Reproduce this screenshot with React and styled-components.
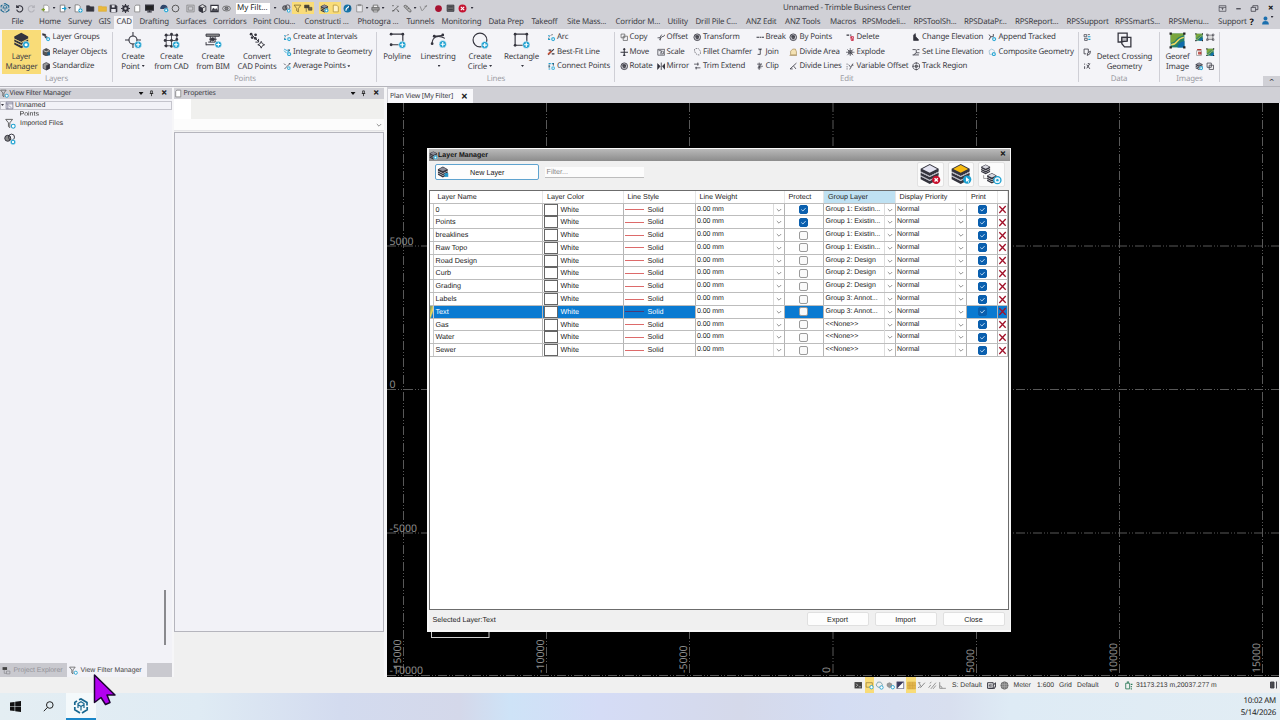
import React from "react";
import styled, { createGlobalStyle, css } from "styled-components";

const colors = {
  chrome: "#d0d0d6",
  ribbon: "#f4f4f8",
  panel: "#f2f2f7",
  face: "#f0f0f0",
  ink: "#3c3c44",
  dark: "#34343e",
  cyan: "#1a9fd0",
  blue: "#0a7ad1",
  highlight: "#f9dc78",
};

const GlobalStyle = createGlobalStyle`
  * { box-sizing: border-box; }
  body {
    margin: 0;
    overflow: hidden;
    font-family: "Noto Sans", "Open Sans", sans-serif;
    text-rendering: geometricPrecision;
  }
  svg { display: block; flex: none; }
`;

/* ---------- icons ---------- */

const Plus = ({ x = 12, y = 12, r = 4, mark = "plus" }) => (
  <g>
    <circle cx={x} cy={y} r={r} fill={colors.cyan} stroke="#fff" strokeWidth="0.5" />
    {mark === "plus" && (
      <path
        d={`M${x - r * 0.6} ${y}h${r * 1.2}M${x} ${y - r * 0.6}v${r * 1.2}`}
        stroke="#fff"
        strokeWidth={r * 0.32}
      />
    )}
    {mark === "dot" && <circle cx={x} cy={y} r={r * 0.45} fill="#fff" stroke="none" />}
  </g>
);

const Stack = ({ top = "#34343e", body = "#34343e" }) => (
  <g stroke="none">
    <path d="M1.200 9.800L7.800 13l6.500-3.200v2L7.800 15.200l-6.600-3.400z" fill={body} />
    <path d="M1.200 7L7.800 10.200 14.300 7v2L7.800 12.300 1.200 9z" fill={body} />
    <path d="M1.200 4.200L7.800 .8l6.500 3.400v2L7.800 9.500 1.200 6.200z" fill={body} />
    <path d="M2.300 4.300l5.500-2.800 5.400 2.800-5.400 2.700z" fill={top} />
  </g>
);

const Node = ({ at }) =>
  at.map(([x, y]) => <circle key={`${x}-${y}`} cx={x} cy={y} r="1.3" fill={colors.dark} stroke="none" />);

const glyphs = {
  logo: (
    <g stroke="#17668f" fill="none" strokeWidth="1.7">
      <path d="M6 1.800L8 .9l6 3.500v3M14.200 9v2.800L9 15M7 15l-5.200-3.200V9M1.800 7V4.400L4 3" />
      <path d="M8 8.500v4M8 8.500L4.800 6.500M8 8.500l3.200-2M5 10V5.500l3-1.700 3 1.700V10" strokeWidth="1.200" />
    </g>
  ),
  undo: <path d="M3 2v4h4M3.500 6a5.500 5.500 0 1 1-.5 4" />,
  redo: <path d="M13 2v4H9M12.500 6a5.500 5.500 0 1 0 .5 4" stroke="#b3b3ba" />,
  newDoc: (
    <g>
      <path d="M5 2h6l3 3v9H5z" fill="#fff" strokeWidth="1.200" stroke="#888" />
      <path d="M4 7v6M1 10h6" stroke="#7c9c26" />
    </g>
  ),
  importDoc: (
    <g>
      <path d="M4 2h8v12H4z" fill="#fff" strokeWidth="1.300" stroke="#666" />
      <path d="M7 8h7M11 5l3 3-3 3" stroke={colors.cyan} />
    </g>
  ),
  docPlus: (
    <g>
      <path d="M2 1.500h6l3 3V14H2z" fill="#fff" strokeWidth="1.300" stroke="#666" />
      <Plus x={11.5} y={11.5} r={4} />
    </g>
  ),
  folder: <path d="M1 3h5l2 2h6v8H1z" fill={colors.dark} strokeWidth="1" />,
  folderY: <path d="M1 4h5l2 1h7v8H1z" fill="#e9b93c" stroke="#d9a62b" strokeWidth="1" />,
  save: (
    <g>
      <path d="M2 2h10l2 2v10H2z" fill={colors.dark} strokeWidth="1.500" />
      <path d="M5 2h5v4H5zM4 9h8v5H4z" fill="#e8e8ee" stroke="none" />
    </g>
  ),
  gear: (
    <g>
      <circle cx="8" cy="8" r="4" strokeWidth="3.500" />
      <path d="M8 0v3M8 13v3M0 8h3M13 8h3M2.300 2.300l2 2M11.700 11.700l2 2M13.700 2.300l-2 2M2.300 13.700l2-2" />
    </g>
  ),
  doc: <path d="M5 2h7v12H3V4.500z" fill="#fff" strokeWidth="1.300" stroke="#777" />,
  monitor: (
    <g>
      <path d="M1 2h14v9H1z" fill="#222" />
      <path d="M4 14h8M8 11v3" />
    </g>
  ),
  cloud: (
    <g>
      <path d="M1.500 8a5 5 0 0 1 5-5.500c4 0 6 2.500 6 5.500z" fill="#30476b" stroke="#30476b" />
      <Plus x={11} y={11} r={4} mark="dot" />
    </g>
  ),
  circle: <circle cx="8" cy="8" r="6" strokeWidth="1.700" stroke="#555" />,
  box: <path d="M1.500 2h13v12h-13zM4 5h8v6H4z" strokeWidth="1.200" stroke="#777" />,
  cube: (
    <g>
      <path d="M8 1l6 3v8l-6 3-6-3V4z" strokeWidth="1.500" fill="#ddd" />
      <path d="M2 4l6 3v8l-6-3z" fill={colors.dark} strokeWidth="1" />
      <path d="M8 7v8M8 7l6-3" strokeWidth="1.500" />
    </g>
  ),
  picture: (
    <g>
      <path d="M1.500 2.500h13v11h-13z" fill="#fff" />
      <path d="M3 12l3-5 3 3 2-2 3 4z" fill={colors.dark} strokeWidth="1" />
    </g>
  ),
  eye: (
    <g>
      <ellipse cx="8" cy="8" rx="7" ry="4.500" strokeWidth="1.500" stroke="#666" />
      <ellipse cx="8" cy="8" rx="3" ry="2.500" fill="#888" strokeWidth="1" />
    </g>
  ),
  globes: (
    <g>
      <circle cx="5" cy="7" r="4" fill="#888" strokeWidth="1.300" />
      <circle cx="10" cy="5.500" r="4" fill="none" strokeWidth="1.300" />
      <Plus x={12} y={12} r={3.5} mark="dot" />
    </g>
  ),
  funnel: <path d="M2 2h12L9.500 8v6l-3-2V8z" strokeWidth="1.400" stroke="#77652c" />,
  flag: (
    <g>
      <path d="M1 2h8v5H1z" fill="#4a4430" strokeWidth="1" />
      <path d="M8 6h6v5H8zM4 8v6" fill="#6d643c" strokeWidth="1" />
    </g>
  ),
  stackSmall: (
    <g>
      <Stack top="#8b8b96" />
      <Plus x={11.5} y={11.500} r={3.8} mark="dot" />
    </g>
  ),
  yellowDoc: <path d="M4 2h6l3 3v9H4z" fill="#fff3c6" stroke="#aa8a30" strokeWidth="1.300" />,
  pen: (
    <g>
      <circle cx="8" cy="8" r="7" fill="#1673a8" stroke="none" />
      <path d="M5 12l1-4 5-4" stroke="#fff" />
      <path d="M12 3v7" stroke="#173e63" />
    </g>
  ),
  report: <path d="M3 2h10v12H3zM6 1h4v2H6z" fill="#ececf0" strokeWidth="1.200" stroke="#777" />,
  printer: (
    <g stroke="#666">
      <path d="M4 6V2h8v4M4 10v4h8v-4" fill="#fff" strokeWidth="1.500" />
      <path d="M1.500 6h13v5h-13z" fill="#999" strokeWidth="1.500" />
    </g>
  ),
  measure: <path d="M2 3h3M11 3l2 2M3 13L13 4M2 12h4M10 9l4 5M12 13h2" strokeWidth="1.500" stroke="#555" />,
  pencil: <path d="M2 3l3-1 9 9v3h-3L2 5zM5 6l3-2M8 9l3-2" strokeWidth="1.300" stroke="#555" fill="#bbb" />,
  slope: <path d="M2 4l3 8M6 12L14 2M10 4h4" strokeWidth="1.300" stroke="#777" />,
  record: <circle cx="8" cy="8" r="6" fill="#a81230" stroke="none" />,
  screen: <path d="M2 2h12v11H2zM4 5h8M4 10h8" fill="#666" strokeWidth="1.500" />,
  recordX: (
    <g>
      <circle cx="8" cy="8" r="7" fill="#c41230" stroke="none" />
      <path d="M5 5l6 6M11 5l-6 6" stroke="#fff" />
    </g>
  ),

  /* large ribbon icons */
  layerManager: (
    <g>
      <Stack top="#34343e" />
      <path d="M1.200 9.300l6.600 3.300 6.500-3.300M1.200 6.500l6.600 3.300 6.500-3.300" stroke="#cdbb80" strokeWidth="0.600" />
      <Plus x={12.3} y={12} r={3.3} mark="dot" />
    </g>
  ),
  newLayer: (
    <g>
      <Stack top="#8c8c98" />
      <path d="M10 9.500h5v5h-5z" fill="#2596c8" stroke="none" />
    </g>
  ),
  createPoint: (
    <g strokeWidth="1">
      <circle cx="7.500" cy="7.500" r="3.800" />
      <path d="M7.500 0v4M7.500 11v4M0 7.500h4M11 7.500h4" />
      <Plus x={12.3} y={12} r={3.4} />
    </g>
  ),
  fromCad: (
    <g strokeWidth="0.8">
      <path d="M1.500 3h12.500M1 8h12M1 13h10M3 1.500v13M8 1v12M13 1.500v12" />
      <Node at={[[3, 3], [8, 2], [13, 3], [2, 8], [13, 7], [3, 13], [8, 13.500], [8, 8]]} />
      <Plus x={12.3} y={12} r={3.400} />
    </g>
  ),
  fromBim: (
    <g strokeWidth="0.9">
      <path d="M1 2h12.500v2H1zM3 9.500h8M5 4v5.500M9.500 4v5.500M1 12h8M1 9.500v3" fill="#999" />
      <path d="M4 6.800h7" />
      <circle cx="7.200" cy="6.800" r="1.500" fill={colors.dark} />
      <Plus x={12.5} y={11.800} r={3.200} />
    </g>
  ),
  convert: (
    <g strokeWidth="0.900">
      <path d="M2 2l7.500 7.500M9 6.500v3H6" />
      <Node at={[[2, 2], [6.200, 2.600], [3, 5.200], [6, 6]]} />
      <path d="M11.500 8.800l1 2.200 2.200 1-2.200 1-1 2.200-1-2.200-2.200-1 2.200-1z" fill="#fff" />
    </g>
  ),
  polyline: (
    <g strokeWidth="1.100">
      <path d="M2 2h11v10H2" />
      <Node at={[[2, 2], [13, 2], [2, 12]]} />
      <Plus x={12.500} y={12} r={3.400} />
    </g>
  ),
  linestring: (
    <g strokeWidth="1">
      <path d="M2 11C2 5 7 2 14 6M4 4l9-1" />
      <Node at={[[2, 11], [4, 4], [12, 2.800]]} />
      <Plus x={12} y={11.500} r={3.400} />
    </g>
  ),
  createCircle: (
    <g strokeWidth="1.100">
      <circle cx="7.500" cy="7.500" r="6.500" />
      <Plus x={12} y={12.300} r={3.400} />
    </g>
  ),
  rectangle: (
    <g strokeWidth="1.100">
      <path d="M2 2h11v10.500H2z" />
      <Node at={[[2, 2], [13, 2], [2, 12.500]]} />
      <Plus x={12.500} y={12} r={3.400} />
    </g>
  ),
  crossing: (
    <g strokeWidth="1.200">
      <path d="M2 1h8.500v7.500L2 9.500zM5.500 5H14v9H8l-2.500-3z" />
      <path d="M5.500 5h5v3.500l-5 .6z" fill="#b8b8be" />
    </g>
  ),
  georef: (
    <g>
      <path d="M1.500 1.500h13v13h-13z" fill="#267f68" stroke="none" />
      <path d="M1.500 10C7 10 5 5 14 3V1.500H1.500z" fill="#7aa63c" stroke="none" />
      <path d="M2 12C9 12 6 6 14 5" stroke="#f0d860" strokeWidth="1.300" />
      <path d="M8 14.500c1-4 3-5 6.500-6v6z" fill="#0f6bab" stroke="none" />
      <path d="M.5.5h2.200v2.200H.5zM13.300.5h2.200v2.200h-2.200zM.5 13.300h2.200v2.200H.5zM13.300 13.300h2.200v2.200h-2.200z" fill="#222" stroke="none" />
    </g>
  ),

  /* small ribbon icons */
  layerGroups: (
    <g>
      <path d="M1 1l6 1.500v3L1 4zM5 6l5 1v4L6 9z" fill={colors.dark} strokeWidth="0.800" />
      <Plus x={11.500} y={11.500} r={4} mark="dot" />
    </g>
  ),
  relayer: (
    <g>
      <path d="M8 1l6 3v8l-6 3-6-3V4z" fill="#555" strokeWidth="1.200" />
      <path d="M3 5l5 2 5-2" stroke="#fff" strokeWidth="1.200" />
      <path d="M10 8h5v6h-5z" fill="#1c5e8c" stroke="none" />
    </g>
  ),
  standardize: (
    <g>
      <path d="M8 1l6 3v8l-6 3-6-3V4z" fill="#999" strokeWidth="1.200" />
      <path d="M8 7l6-3v8l-6 3z" fill={colors.dark} strokeWidth="1" />
    </g>
  ),
  arcPlus: (
    <g>
      <path d="M3 12c0-6 4-9 9-9" strokeWidth="1.300" strokeDasharray="3 2" />
      <path d="M2 5h3M2 12h4" stroke={colors.cyan} />
      <Plus x={11.500} y={11.500} r={3.800} mark="dot" />
    </g>
  ),
  integrate: (
    <g>
      <path d="M2 2l10 5M2 5l5 5M13 2L8 9" strokeWidth="1.500" stroke={colors.cyan} />
      <path d="M9 3l4 2" strokeWidth="1.500" />
      <Plus x={11.500} y={11.500} r={4} mark="dot" />
    </g>
  ),
  average: (
    <g>
      <path d="M2 3l3 3M13 3L3 13M11 3h3" strokeWidth="1.500" />
      <Plus x={11} y={11.500} r={3.500} mark="dot" />
    </g>
  ),
  bestFit: (
    <g>
      <path d="M2 13L13 2M3 4h5M9 11h5" />
      <path d="M2 12l6-6" stroke="#c8553a" strokeWidth="3" />
    </g>
  ),
  connect: (
    <g>
      <path d="M3 3h4M3 8h3M9 3h4M3 13h3" stroke={colors.cyan} />
      <path d="M4 5v6M12 2v5" strokeWidth="1.400" />
      <Plus x={11.500} y={11.500} r={3.500} mark="dot" />
    </g>
  ),
  copy: <path d="M2 2h7v7H2zM6 6h8v8H6z" fill="#f4f4f8" strokeWidth="1.300" stroke="#555" />,
  move: <path d="M8 1v14M1 8h14M6 3l2-2 2 2M6 13l2 2 2-2" />,
  rotate: (
    <g>
      <circle cx="8" cy="8" r="6.300" strokeWidth="1.500" fill="#c8c8ce" />
      <path d="M5 5h5v5H6zM6 7h5M8 10v2" strokeWidth="1.500" fill="#777" />
    </g>
  ),
  offset: <path d="M1 9h4l4-6M5 13l4-6 4-1 2-3M6 8v6" strokeWidth="1.400" />,
  scale: <path d="M1.500 2.500h13v11h-13zM3 5h5v4M6 11h6V6M11 5l-5 5" strokeWidth="1.300" />,
  mirror: (
    <g>
      <path d="M1 3l5 5-5 6zM15 3l-5 5 5 6z" fill={colors.dark} strokeWidth="1" />
      <path d="M8 1v14" strokeWidth="1.500" />
    </g>
  ),
  fillet: <path d="M3 2C2 8 6 14 13 13M5 1h5l4 5v5" strokeWidth="1.100" strokeDasharray="3 1.500" />,
  trim: <path d="M2 4h9M9 1v6M4 11h10M6 9v5" strokeWidth="1.400" />,
  breakLine: <path d="M1 8h5M7 8h3M11 8h4" />,
  join: <path d="M4 2h7M8 2v10M3 12h5M6 4l2-2 2 2" strokeWidth="1.500" />,
  clip: <path d="M6 1v14M2 4h9M4 8h9M3 11h7M10 3l-5 9" strokeWidth="1.300" />,
  area: <path d="M3 13V6l4-4h5l2 5v6zM1 14h14" fill="#f4e2b4" strokeWidth="1.200" stroke="#a08650" />,
  divLines: <path d="M2 13L14 2M2 13h5M9 8l4 5" strokeWidth="1.500" />,
  remove: (
    <g>
      <path d="M1 4h5M8 4h2" />
      <path d="M9 7h5l-1 7h-3zM9 7l5 7" stroke="#c41230" strokeWidth="1.600" />
    </g>
  ),
  explode: <path d="M8 0v16M0 8h16M2.500 2.500l11 11M13.500 2.500l-11 11M5 5h6v6H5z" strokeWidth="1.200" />,
  varOffset: <path d="M2 3v2M2 8v2M2 12v2M5 5l4 5M13 3l-4 7-2 4M11 6h3" strokeWidth="1.400" />,
  changeElev: <path d="M3 14V4l3-3 1 6 5 5v2zM5 5v7" fill={colors.dark} strokeWidth="1.300" />,
  setElev: <path d="M1 3h6M10 3h4M8 3v6M3 13l5-4h6M1 13h12" strokeWidth="1.500" />,
  track: (
    <g>
      <path d="M5 2h6l3 3v6l-3 3H5l-3-3V5z" strokeWidth="1.400" />
      <circle cx="8" cy="8" r="2.500" fill="#777" strokeWidth="1.300" />
      <path d="M8 0v4M8 12v4M0 8h4M12 8h4" strokeWidth="1.200" />
    </g>
  ),
  append: (
    <g>
      <path d="M2 3l3 4-3 6M5 7h5M10 2v5" strokeWidth="1.600" />
      <Plus x={11.500} y={11.500} r={4} mark="dot" />
    </g>
  ),
  composite: (
    <g>
      <path d="M2 5l5-3 5 3v7H3z" stroke="#9bbdd0" strokeWidth="1.500" />
      <Plus x={11} y={11.500} r={4} mark="dot" />
    </g>
  ),
  dataA: (
    <g>
      <path d="M2 3h5v4H2zM9 3h4M3 10h5v4H3z" strokeWidth="1.300" />
      <path d="M9 7h5M10 12h4" stroke={colors.cyan} />
    </g>
  ),
  dataB: <path d="M2 2h8v6M2 2v9h4M8 14l1-5 5-3-1 5z" strokeWidth="1.500" />,
  dataC: <path d="M3 3v2M3 8v5M7 5l6 8M13 3L7 12M9 3h3" strokeWidth="1.600" />,
  frame: <path d="M3 4h10v8H3zM1 2h3v3H1zM12 2h3v3h-3zM1 11h3v3H1zM12 11h3v3h-3z" strokeWidth="1" fill="#ddd" />,
  pageRed: (
    <g>
      <path d="M3 5h9v9H3z" fill="#fff" strokeWidth="1.300" stroke="#888" />
      <path d="M4 3h8M7 8h4v3H7z" stroke="#b33b35" />
    </g>
  ),
  detach: <path d="M2 2h8v8H2zM6 6h8v8H6z" fill="#f4f4f8" strokeWidth="1.400" />,

  /* dialog icons */
  stackDelete: (
    <g>
      <Stack top="#e4e4f2" />
      <path d="M1.200 9.300l6.600 3.300 6.500-3.300M1.200 6.500l6.600 3.300 6.500-3.300" stroke="#a8a8b4" strokeWidth="0.700" />
      <circle cx="12.500" cy="12.300" r="3" fill="#c8102e" stroke="none" />
      <path d="M11.300 11.100l2.400 2.400M13.700 11.100l-2.400 2.400" stroke="#fff" strokeWidth="1" />
    </g>
  ),
  stackSelect: (
    <g>
      <Stack top="#f7bb10" />
      <path d="M1.200 9.300l6.600 3.300 6.500-3.300M1.200 6.500l6.600 3.300 6.500-3.300" stroke="#a8a8b4" strokeWidth="0.700" />
      <circle cx="12.500" cy="12" r="3" fill={colors.cyan} stroke="none" />
      <path d="M11.600 10.200v3.600l1-.9.800 1.500.6-.3-.8-1.500h1.200z" fill="#fff" stroke="none" />
    </g>
  ),
  stackGroups: (
    <g>
      <g transform="translate(-.5 0) scale(.52)"><Stack top="#d8d8e0" /></g>
      <path d="M2 8.500v2.500h2.500" stroke="#999" strokeWidth="0.700" />
      <g transform="translate(4 6.500) scale(.55)"><Stack top="#d8d8e0" /></g>
      <circle cx="12.500" cy="12.300" r="2.700" fill="#e9f6fc" stroke={colors.cyan} strokeWidth="1" />
      <circle cx="12.500" cy="12.300" r="0.900" fill={colors.cyan} stroke="none" />
    </g>
  ),
  filterGear: (
    <g>
      <path d="M1 2h10L7 7v7l-2-1.500V7z" strokeWidth="1.300" stroke="#555" />
      <circle cx="12" cy="12" r="2.800" fill="#fff" stroke={colors.cyan} strokeWidth="1.500" />
    </g>
  ),
  explorer: (
    <g>
      <path d="M1 2h8v5H1z" fill="#444" stroke="none" />
      <path d="M4 7v6h4M8 9h6v5H8z" stroke="#8a8a90" strokeWidth="1.300" />
    </g>
  ),
  treeDoc: <path d="M2 2h12v12H2zM2 5h12M5 5v9M7 8l4 4" strokeWidth="1.200" stroke="#666680" />,
  pin: <path d="M6 2h4v6H6zM4 8h8M8 8v6" strokeWidth="1.800" stroke="#222" />,
  person: <path d="M8 1a3.500 3.500 0 1 1-.1 0zM2 15c0-4 2-6 6-6s6 2 6 6z" fill="#1b6fae" stroke="none" />,
  winHelp: <path d="M2 3h12v10H2zM2 6h12M8 11V7M6.500 8.500L8 7l1.500 1.500" strokeWidth="1.100" />,
  minimize: <path d="M4 8.500h8" />,
  restore: <path d="M2 6h8v7H2zM5 6V3h9v7h-4" strokeWidth="1.300" />,

  /* status bar */
  term: (
    <g>
      <path d="M1 2h14v12H1z" fill="#444" stroke="none" />
      <path d="M4 5l3 3-3 3M9 11h4" stroke="#ddd" strokeWidth="1.300" />
    </g>
  ),
  snapBox: (
    <g>
      <path d="M2 3h11v8H2z" strokeWidth="1.300" stroke="#99803c" />
      <circle cx="11.500" cy="11" r="3" fill="#fff" stroke={colors.cyan} strokeWidth="1.500" />
    </g>
  ),
  snapPoly: (
    <g>
      <path d="M5 2h5l3 4-1 5H5L2 7z" strokeWidth="1.200" stroke="#5a8794" />
      <circle cx="11.500" cy="11.500" r="3" fill="#fff" stroke={colors.cyan} strokeWidth="1.500" />
    </g>
  ),
  snapCloud: (
    <g>
      <path d="M2 9V5l4-2 4 2v5l-4 2z" fill="#999" strokeWidth="1" stroke="#777" />
      <circle cx="12" cy="11" r="3" fill="#fff" stroke={colors.cyan} strokeWidth="1.500" />
    </g>
  ),
  contrast: (
    <g>
      <path d="M1.500 1.500h13v13h-13z" fill="#fff" strokeWidth="1.200" stroke="#3a3a5c" />
      <path d="M14 2v12H2z" fill="#3a3a5c" stroke="none" transform="rotate(180 8 8)" />
    </g>
  ),
  gridFill: <path d="M1 2h14v12H1zM5 2v12M10 2v12M1 8h14" fill="#e2b54c" stroke="#d0a440" strokeWidth="1" />,
  snapA: <path d="M2 3h4M4 4l3 6M6 12l8-9M2 12l3-2" strokeWidth="1.300" stroke="#666" />,
  snapB: <path d="M1 12l4-5M5 14l9-11M9 14l5-6M3 4l3-2" strokeWidth="1.300" stroke="#777" />,
  snapC: <path d="M3 2v11h11M3 9c3 0 4 1 4 4" strokeWidth="1.300" stroke="#777" />,
  sceneA: <path d="M1 3h10v10H1zM4 6v4M7 5v6M11 8l4-5v8h-3M3 13h11" strokeWidth="1.700" />,
  sphere: (
    <g>
      <circle cx="8" cy="8" r="6.500" fill="#777" strokeWidth="1" stroke="#555" />
      <path d="M2 6h12M2 10h12M8 1v14M5 2v12M11 2v12" stroke="#bbb" strokeWidth="0.800" />
    </g>
  ),
  device: (
    <g>
      <path d="M3 4h7v10H3z" strokeWidth="1.500" stroke="#2b7a58" />
      <path d="M5 2h4M12 6h3M12 10h2M12 14h2" stroke="#2b7a58" />
    </g>
  ),
  sidePanel: <path d="M1 2h7v12H1zM3 6h4M3 10h4M13 1v14" strokeWidth="1.700" fill="#555" />,
};

const Icon = ({ name, size = 9, ...rest }) => (
  <svg
    width={size}
    height={size}
    viewBox="0 0 16 16"
    fill="none"
    stroke={colors.dark}
    strokeWidth="2"
    {...rest}
  >
    {glyphs[name]}
  </svg>
);

/* ---------- window frame ---------- */

const Window = styled.div`
  position: relative;
  display: flex;
  flex-direction: column;
  width: 1280px;
  height: 720px;
  overflow: hidden;
  color: ${colors.ink};
  background: ${colors.chrome};
  white-space: nowrap;
`;

const QuickBar = styled.header`
  display: flex;
  align-items: center;
  flex: none;
  height: 16px;
  font-size: 8px;
  line-height: 10px;
  letter-spacing: -0.2px;
`;

const Slot = styled.span`
  display: flex;
  flex: none;
  margin-left: ${({ $ml }) => $ml}px;
`;

const Dot = styled.i`
  flex: none;
  width: 3px;
  height: 2px;
  margin-left: ${({ $ml }) => $ml}px;
  background: ${colors.dark};
  clip-path: polygon(0 0, 100% 0, 50% 100%);
`;

const PanelArrow = styled.i`
  width: 5px;
  height: 3px;
  background: #111;
  clip-path: polygon(0 0, 100% 0, 50% 100%);
`;

const Toggled = styled.span`
  display: flex;
  align-items: center;
  flex: none;
  gap: 2px;
  height: 12px;
  padding: 0 1px;
  margin-left: ${({ $ml }) => $ml}px;
  background: ${colors.highlight};
`;

const FilterBox = styled.span`
  flex: none;
  width: 34px;
  height: 11px;
  margin-left: 5.5px;
  padding-left: 1px;
  background: #fff;
  color: #222;
  letter-spacing: -0.05px;
`;

const WindowTitle = styled.h1`
  flex: 1;
  margin: 0 0 0 309.5px;
  font-size: 8px;
  font-weight: 400;
`;

const WindowButtons = styled.div`
  display: flex;
  gap: 7px;
  margin-right: 5px;
`;

const Cross = styled.span`
  flex: none;
  width: 9px;
  text-align: center;
  font: 700 ${({ $size = 8 }) => $size}px/9px "DejaVu Sans", sans-serif;
  -webkit-text-stroke: 0.4px #111;
  color: #111;
`;

const TabRow = styled.nav`
  display: flex;
  flex: none;
  height: 13px;
  padding-left: 8px;
  font-size: 7.900px;
  line-height: 12px;
  letter-spacing: -0.16px;
`;

const Tab = styled.span`
  flex: none;
  width: ${({ $w }) => $w}px;
  padding-left: 3.500px;
  ${({ $active }) =>
    $active &&
    css`
      width: 19.500px;
      margin-right: 3px;
      padding-left: 3px;
      background: ${colors.ribbon};
    `}
`;

const Help = styled.b`
  width: 11px;
  margin-left: 2px;
  font-size: 9px;
  color: #111;
`;

/* ---------- ribbon ---------- */

const RibbonBar = styled.section`
  position: relative;
  display: flex;
  flex: none;
  height: 58px;
  padding-top: 1px;
  background: ${colors.ribbon};
  border-bottom: 1px solid #b4b4bb;
  font-size: 7.900px;
  letter-spacing: -0.19px;
`;

const Group = styled.div`
  position: relative;
  display: flex;
  flex-direction: column;
  flex: none;
  width: ${({ $w }) => $w}px;
  &::after {
    content: "";
    position: absolute;
    right: 0;
    top: 2px;
    bottom: 4px;
    border-right: 1px solid #cfcfd6;
  }
`;

const GroupBody = styled.div`
  display: flex;
  flex: none;
  height: 43.500px;
  padding-left: ${({ $pl = 0 }) => $pl}px;
`;

const GroupName = styled.span`
  text-align: center;
  line-height: 11px;
  color: #9c9ca4;
`;

const Big = styled.div`
  display: flex;
  flex-direction: column;
  align-items: center;
  flex: none;
  width: ${({ $w }) => $w}px;
  padding-top: 1.500px;
  line-height: 10px;
  background: ${({ $on }) => ($on ? colors.highlight : "none")};
  svg {
    margin-bottom: 3.500px;
  }
  i {
    display: inline-block;
    margin: 0 0 2px 2px;
  }
`;

const Column = styled.div`
  display: flex;
  flex-direction: column;
  flex: none;
  width: ${({ $w }) => $w}px;
`;

const Command = styled.span`
  display: flex;
  align-items: center;
  gap: ${({ $gap = 2 }) => $gap}px;
  height: 14.500px;
`;

const Collapse = styled.span`
  position: absolute;
  right: 0;
  bottom: 0;
  width: 17px;
  height: 10px;
  background: ${colors.chrome};
  text-align: center;
  font: 700 7px/12px "DejaVu Sans", sans-serif;
`;

const BigButton = ({ icon, lines, w, on, caret }) => (
  <Big $w={w} $on={on}>
    <Icon name={icon} size={17} />
    <span>{lines[0]}</span>
    <span>
      {lines[1]}
      {caret && <Dot as="i" $ml={0} />}
    </span>
  </Big>
);

const Commands = ({ w, gap, items }) => (
  <Column $w={w}>
    {items.map(([icon, label, caret]) => (
      <Command key={icon + label} $gap={gap}>
        <Icon name={icon} size={8.5} />
        {label}
        {caret && <Dot $ml={0} />}
      </Command>
    ))}
  </Column>
);

const tabs = [
  ["File", 27.5], ["Home", 29], ["Survey", 30.5], ["GIS", 18.5], ["CAD", 22.5, true],
  ["Drafting", 36.5], ["Surfaces", 37], ["Corridors", 40], ["Point Clou...", 51.5],
  ["Constructi ...", 53], ["Photogra ...", 49], ["Tunnels", 35], ["Monitoring", 47],
  ["Data Prep", 43], ["Takeoff", 35.5], ["Site Mass...", 48.5], ["Corridor M...", 52],
  ["Utility", 28], ["Drill Pile C...", 50.5], ["ANZ Edit", 39], ["ANZ Tools", 45],
  ["Macros", 32], ["RPSModeli...", 51.5], ["RPSToolSh...", 50.5], ["RPSDataPr...", 51],
  ["RPSReport...", 51.5], ["RPSSupport", 48.5], ["RPSSmartS...", 53.5], ["RPSMenu...", 49.5],
  ["Support", 33],
];

const QuickAccess = () => (
  <QuickBar>
    <Icon name="logo" size={10} />
    <Slot $ml={4.5}><Icon name="undo" /></Slot>
    <Slot $ml={3}><Icon name="redo" /></Slot>
    <Slot $ml={5}><Icon name="newDoc" /></Slot>
    <Dot $ml={3} />
    <Slot $ml={2}><Icon name="importDoc" /></Slot>
    <Dot $ml={1.5} />
    <Slot $ml={3}><Icon name="docPlus" /></Slot>
    <Slot $ml={2.5}><Icon name="folder" /></Slot>
    <Slot $ml={3}><Icon name="folderY" /></Slot>
    <Slot $ml={2.5}><Icon name="save" /></Slot>
    <Slot $ml={3}><Icon name="gear" /></Slot>
    <Slot $ml={2.5}><Icon name="doc" /></Slot>
    <Slot $ml={3}><Icon name="monitor" /></Slot>
    <Slot $ml={6}><Icon name="cloud" /></Slot>
    <Slot $ml={2.5}><Icon name="circle" /></Slot>
    <Slot $ml={5.5}><Icon name="box" /></Slot>
    <Slot $ml={3}><Icon name="cube" /></Slot>
    <Slot $ml={3}><Icon name="picture" /></Slot>
    <Slot $ml={3}><Icon name="eye" /></Slot>
    <FilterBox>My Filt...</FilterBox>
    <Dot $ml={3.5} />
    <Slot $ml={5}><Icon name="globes" /></Slot>
    <Toggled $ml={1}>
      <Icon name="funnel" />
      <Icon name="flag" />
    </Toggled>
    <Toggled $ml={5}>
      <Icon name="stackSmall" />
      <Icon name="yellowDoc" />
    </Toggled>
    <Slot $ml={2}><Icon name="pen" /></Slot>
    <Slot $ml={3}><Icon name="report" /></Slot>
    <Dot $ml={2} />
    <Slot $ml={2.5}><Icon name="printer" /></Slot>
    <Dot $ml={1.5} />
    <Slot $ml={6}><Icon name="measure" /></Slot>
    <Slot $ml={3}><Icon name="pencil" /></Slot>
    <Dot $ml={2} />
    <Slot $ml={2}><Icon name="slope" /></Slot>
    <Slot $ml={6}><Icon name="record" /></Slot>
    <Slot $ml={3}><Icon name="screen" /></Slot>
    <Slot $ml={3}><Icon name="recordX" /></Slot>
    <Dot $ml={4} />
    <WindowTitle>Unnamed - Trimble Business Center</WindowTitle>
    <WindowButtons>
      <Icon name="winHelp" />
      <Icon name="minimize" />
      <Icon name="restore" />
      <Cross $size={6.5}>✕</Cross>
    </WindowButtons>
  </QuickBar>
);

const Ribbon = () => (
  <RibbonBar>
    <Group $w={113}>
      <GroupBody $pl={2}>
        <BigButton icon="layerManager" lines={["Layer", "Manager"]} w={39} on />
        <Column $w={1} />
        <Commands
          w={69}
          items={[["layerGroups", "Layer Groups"], ["relayer", "Relayer Objects"], ["standardize", "Standardize"]]}
        />
      </GroupBody>
      <GroupName>Layers</GroupName>
    </Group>
    <Group $w={264}>
      <GroupBody $pl={1}>
        <BigButton icon="createPoint" lines={["Create", "Point"]} w={38} caret />
        <BigButton icon="fromCad" lines={["Create", "from CAD"]} w={39} />
        <BigButton icon="fromBim" lines={["Create", "from BIM"]} w={44} />
        <BigButton icon="convert" lines={["Convert", "CAD Points"]} w={44} />
        <Column $w={4} />
        <Commands
          w={90}
          gap={1.5}
          items={[["arcPlus", "Create at Intervals"], ["integrate", "Integrate to Geometry"], ["average", "Average Points", true]]}
        />
      </GroupBody>
      <GroupName>Points</GroupName>
    </Group>
    <Group $w={238}>
      <GroupBody $pl={0}>
        <BigButton icon="polyline" lines={["Polyline", ""]} w={40} />
        <BigButton icon="linestring" lines={["Linestring", ""]} w={42} caret />
        <BigButton icon="createCircle" lines={["Create", "Circle"]} w={42} caret />
        <BigButton icon="rectangle" lines={["Rectangle", ""]} w={41} caret />
        <Column $w={5} />
        <Commands w={68} gap={1.5} items={[["arcPlus", "Arc"], ["bestFit", "Best-Fit Line"], ["connect", "Connect Points"]]} />
      </GroupBody>
      <GroupName>Lines</GroupName>
    </Group>
    <Group $w={463.5}>
      <GroupBody $pl={4.5}>
        <Commands w={37} gap={1.5} items={[["copy", "Copy"], ["move", "Move"], ["rotate", "Rotate"]]} />
        <Commands w={36} gap={1.5} items={[["offset", "Offset"], ["scale", "Scale"], ["mirror", "Mirror"]]} />
        <Commands w={63} items={[["rotate", "Transform"], ["fillet", "Fillet Chamfer"], ["trim", "Trim Extend"]]} />
        <Commands w={33.5} gap={1.5} items={[["breakLine", "Break"], ["join", "Join"], ["clip", "Clip"]]} />
        <Commands w={57} items={[["rotate", "By Points"], ["area", "Divide Area"], ["divLines", "Divide Lines"]]} />
        <Commands w={65.5} items={[["remove", "Delete"], ["explode", "Explode"], ["varOffset", "Variable Offset"]]} />
        <Commands
          w={76.5}
          items={[["changeElev", "Change Elevation"], ["setElev", "Set Line Elevation"], ["track", "Track Region"]]}
        />
        <Commands w={88} items={[["append", "Append Tracked"], ["composite", "Composite Geometry"]]} />
      </GroupBody>
      <GroupName>Edit</GroupName>
    </Group>
    <Group $w={81}>
      <GroupBody $pl={4}>
        <Commands w={9} items={[["dataA", ""], ["dataB", ""], ["dataC", ""]]} />
        <BigButton icon="crossing" lines={["Detect Crossing", "Geometry"]} w={66} />
      </GroupBody>
      <GroupName>Data</GroupName>
    </Group>
    <Group $w={60}>
      <GroupBody $pl={4}>
        <BigButton icon="georef" lines={["Georef", "Image"]} w={28} />
        <Column $w={3} />
        <Commands w={11.5} items={[["georef", ""], ["pageRed", ""], ["stackSmall", ""]]} />
        <Commands w={11} items={[["frame", ""], ["georef", ""], ["detach", ""]]} />
      </GroupBody>
      <GroupName>Images</GroupName>
    </Group>
    <Collapse>^</Collapse>
  </RibbonBar>
);

/* ---------- docked panels ---------- */

const Workspace = styled.main`
  display: flex;
  flex: none;
  height: 590px;
  background: #f6f6f8;
  font-family: "Liberation Sans", Arial, sans-serif;
`;

const Dock = styled.section`
  display: flex;
  flex-direction: column;
  flex: none;
  width: ${({ $w }) => $w}px;
  margin-right: ${({ $mr }) => $mr}px;
  background: ${({ $bg }) => $bg};
`;

const DockTitle = styled.h2`
  display: flex;
  align-items: center;
  flex: none;
  gap: 0.500px;
  height: 11px;
  margin: 1px 0 0;
  padding-right: ${({ $pr }) => $pr}px;
  background: ${colors.chrome};
  font: 400 7px/10px "Noto Sans", sans-serif;
  letter-spacing: -0.18px;
  span:first-of-type {
    flex: 1;
  }
`;

const DockTools = styled.div`
  display: flex;
  align-items: center;
  gap: 4.500px;
`;

const Tree = styled.div`
  display: flex;
  flex-direction: column;
  flex: 1;
  position: relative;
  font-size: 6.800px;
  color: #333;
`;

const RootRow = styled.div`
  display: flex;
  align-items: center;
  gap: 1px;
  height: 9px;
  margin: 1.500px 0 0;
  width: 172px;
  border: 1px solid #c4c4cc;
  font-size: 7px;
`;

/* half-scrolled row, its lower part fades out */
const FadedRow = styled.div`
  height: 8px;
  margin: 1.500px 0 -3.500px 19.500px;
  font-size: 7px;
  line-height: 8px;
  mask-image: linear-gradient(#000 50%, transparent 65%);
`;

const TreeRow = styled.div`
  display: flex;
  align-items: center;
  gap: 4px;
  height: 15.500px;
  padding-left: ${({ $pl = 5 }) => $pl}px;
`;

const Thumb = styled.i`
  position: absolute;
  right: 6.500px;
  bottom: 18px;
  width: 1.500px;
  height: 55px;
  background: #8a8a8e;
`;

const DockTabs = styled.div`
  display: flex;
  flex: none;
  height: 14px;
  background: #c9c9cf;
  font-size: 6.900px;
`;

const DockTab = styled.span`
  display: flex;
  align-items: center;
  gap: 2.500px;
  width: ${({ $w }) => $w}px;
  padding-left: 2px;
  color: ${({ $on }) => ($on ? "#444" : "#929298")};
  background: ${({ $on }) => ($on ? colors.panel : "none")};
`;

const ObjectTile = styled.div`
  flex: none;
  height: 20px;
  background: linear-gradient(90deg, #fff 17px, #f0f0ee 17px);
`;

const Combo = styled.div`
  display: flex;
  align-items: center;
  justify-content: flex-end;
  flex: none;
  height: 12px;
  padding-right: 2.500px;
  background: #fcfcfc;
  border-bottom: 1px solid #e4e4e6;
`;

const PropertyBox = styled.div`
  height: 500px;
  margin-top: 0.500px;
  background: ${colors.panel};
  border: 1px solid #b5b5bd;
`;

const ViewArea = styled.section`
  position: relative;
  display: flex;
  flex-direction: column;
  flex: 1;
`;

const ViewTabs = styled.div`
  display: flex;
  flex: none;
  height: 16px;
  padding: 2px 0 0 1px;
  background: ${colors.chrome};
`;

const ViewTab = styled.span`
  display: flex;
  align-items: center;
  gap: 6.500px;
  width: 85px;
  padding-left: 2px;
  background: #f8f8fb;
  font: 7px/13px "Noto Sans", sans-serif;
  letter-spacing: -0.14px;
`;

const Canvas = styled.svg`
  background: #000;
  font-family: "Noto Sans", sans-serif;
  font-size: 10.500px;
  fill: #8c8c8c;
`;

const Chevron = ({ size = 6, color = "#777" }) => (
  <svg width={size} height={size} viewBox="0 0 6 6" fill="none" stroke={color} strokeWidth="0.8">
    <path d="M0.800 2l2.200 2.200L5.200 2" />
  </svg>
);

const DockHeader = ({ icon, title, pr }) => (
  <DockTitle $pr={pr}>
    <Icon name={icon} size={9} />
    <span>{title}</span>
    <DockTools>
      <PanelArrow />
      <Icon name="pin" size={7} />
      <Cross $size={7}>✕</Cross>
    </DockTools>
  </DockTitle>
);

const gridX = [
  [16.5, "-15000"], [159.5, "-10000"], [302.5, "-5000"], [446, "0"], [589.5, "5000"], [732.5, "10000"], [875.5, "15000"],
];
const gridY = [
  [143, "5000"], [286.5, "0"], [430, "-5000"], [572.5, "-10000"],
];

const PlanView = () => (
  <Canvas width="892" height="574" viewBox="0 0 892 574">
    <rect x="44.500" y="500" width="57.500" height="34.500" fill="none" stroke="#cfcfcf" />
    {gridX.map(([x, label]) => (
      <g key={x}>
        <line x1={x} x2={x} y1="0" y2="572" stroke="#585858" strokeDasharray="9 2 1 2 1 2" />
        <text transform={`translate(${x - 2.7} 570) rotate(-90)`}>{label}</text>
      </g>
    ))}
    {gridY.map(([y, label]) => (
      <g key={y}>
        <line x1="0" x2="892" y1={y} y2={y} stroke="#585858" strokeDasharray="9 2 1 2 1 2" />
        <text x="2.500" y={y - 1.5}>{label}</text>
      </g>
    ))}
  </Canvas>
);

/* ---------- layer manager dialog ---------- */

const Dialog = styled.section`
  position: absolute;
  left: 40px;
  top: 60.500px;
  display: flex;
  flex-direction: column;
  width: 584px;
  height: 484px;
  padding: 1.500px;
  background: #f8f8f8;
  color: #222;
  font-size: 7.200px;
`;

const DialogTitle = styled.h2`
  display: flex;
  align-items: center;
  flex: none;
  justify-content: space-between;
  height: 11.500px;
  margin: 0;
  padding-right: 2px;
  background: linear-gradient(#b9b9b9, #8c8c8c);
  font-size: 7px;
  letter-spacing: 0.050px;
  color: #111;
  span:first-child {
    display: flex;
    align-items: center;
    gap: 0.500px;
    padding-top: 1px;
  }
`;

const DialogBar = styled.div`
  display: flex;
  align-items: flex-start;
  flex: none;
  height: 29px;
  padding: 1.500px 5px 0 6px;
  background: ${colors.face};
`;

const NewLayer = styled.button`
  display: flex;
  align-items: center;
  width: 104.500px;
  height: 16px;
  margin: 2px 6px 0 0;
  padding: 0 0 0 1px;
  border: 1px solid #5fa3cf;
  border-radius: 2px;
  background: #fdfdfd;
  font: 7.200px "Liberation Sans", sans-serif;
  color: #222;
  span {
    flex: 1;
    padding-right: 12px;
  }
`;

const FilterInput = styled.span`
  width: 98.500px;
  height: 11px;
  margin-top: 4.500px;
  padding-left: 1.500px;
  background: #fcfcfc;
  border-bottom: 1px solid #bdbdbd;
  font-size: 7.200px;
  line-height: 10px;
  color: #888;
`;

const ToolButtons = styled.div`
  display: flex;
  gap: 4px;
  margin-left: auto;
`;

const ToolButton = styled.span`
  display: flex;
  align-items: center;
  justify-content: center;
  width: 26.500px;
  height: 24.500px;
  background: #fbfbfb;
  border: 1px solid #e2e2e2;
  border-radius: 2px;
`;

const Table = styled.div`
  flex: none;
  height: 420px;
  margin: 0 0.500px 0 0.500px;
  background: #fff;
  border: 1px solid #6c6c6c;
  border-top-width: 1.500px;
`;

const columns = "3.5px 109.5px 80.5px 72px 89px 39.5px 71.5px 71.5px 31px 10px";

const HeadRow = styled.div`
  display: grid;
  grid-template-columns: ${columns};
  height: 12px;
  line-height: 12.500px;
`;

const HeadCell = styled.span`
  padding-left: 4px;
  background: ${({ $on }) => ($on ? "#bfe1f2" : "none")};
  border-right: 1px solid #e6e6e6;
`;

const Row = styled.div`
  display: grid;
  grid-template-columns: ${columns};
  height: 12.800px;
  border-top: 1px solid #bdbdbd;
  &:last-child {
    height: 13.800px;
    border-bottom: 1px solid #bdbdbd;
  }
`;

const Cell = styled.span`
  display: flex;
  align-items: center;
  min-width: 0;
  padding-left: ${({ $pl = 2 }) => $pl}px;
  border-right: 1px solid #b4b4b4;
  line-height: 10px;
  justify-content: ${({ $center }) => ($center ? "center" : "flex-start")};
  ${({ $on }) =>
    $on &&
    css`
      color: #fff;
      background: ${colors.blue};
    `}
`;

const Select = styled(Cell)`
  justify-content: space-between;
  font-size: 7px;
  letter-spacing: -0.05px;
  em {
    display: flex;
    align-items: center;
    justify-content: center;
    align-self: stretch;
    width: 11px;
    border-left: 1px solid #dcdcdc;
  }
`;

const Swatch = styled.i`
  width: 14px;
  height: 12px;
  margin-right: 2.500px;
  background: #fff;
  border: 1px solid #666;
`;

const Stroke = styled.i`
  width: 18.500px;
  height: 1px;
  margin-right: 4px;
  background: ${({ $on }) => ($on ? "#4a3a78" : "#dd6a6a")};
`;

const Check = styled.i`
  display: flex;
  align-items: center;
  justify-content: center;
  width: 9px;
  height: 9px;
  border-radius: 2px;
  border: 1px solid ${({ $checked }) => ($checked ? "#0a5fae" : "#9a9a9a")};
  background: ${({ $checked }) => ($checked ? "#0a5fae" : "#fafafa")};
`;

const Marker = styled(Cell)`
  border-right-color: #c8c8c8;
  background: ${({ $on }) => ($on ? "linear-gradient(110deg, #8aa06a 20%, #f5dd53 55%, #0a7ad1 80%)" : "#fff")};
`;

const DialogFooter = styled.footer`
  display: flex;
  align-items: center;
  flex: 1;
  gap: 6px;
  padding: 0 5px 1.500px 4px;
  background: ${colors.face};
  span {
    flex: 1;
  }
`;

const FooterButton = styled.button`
  width: 62px;
  height: 13.500px;
  padding: 0;
  border: 1px solid #e0e0e0;
  border-radius: 2px;
  background: #fdfdfd;
  color: #222;
  font: 7.200px "Liberation Sans", sans-serif;
`;

const Tick = () => (
  <svg width="7" height="7" viewBox="0 0 7 7" fill="none" stroke="#cfe6fa" strokeWidth="0.9">
    <path d="M1.300 3.500l1.600 1.500 2.700-2.900" />
  </svg>
);

const RedX = () => (
  <svg width="9" height="9" viewBox="0 0 9 9" fill="none" stroke="#a01028" strokeWidth="1.300">
    <path d="M1.300 1.300l6.400 6.400M7.700 1l-6.400 7" />
  </svg>
);

const layers = [
  { name: "0", locked: true, group: "Group 1: Existin..." },
  { name: "Points", locked: true, group: "Group 1: Existin..." },
  { name: "breaklines", group: "Group 1: Existin..." },
  { name: "Raw Topo", group: "Group 1: Existin..." },
  { name: "Road Design", group: "Group 2: Design" },
  { name: "Curb", group: "Group 2: Design" },
  { name: "Grading", group: "Group 2: Design" },
  { name: "Labels", group: "Group 3: Annot..." },
  { name: "Text", group: "Group 3: Annot...", selected: true },
  { name: "Gas", group: "<<None>>" },
  { name: "Water", group: "<<None>>" },
  { name: "Sewer", group: "<<None>>" },
];

const heads = ["Layer Name", "Layer Color", "Line Style", "Line Weight", "Protect", "Group Layer", "Display Priority", "Print", ""];

const Dropdown = ({ children }) => (
  <Select $pl={1.5}>
    {children}
    <em>
      <Chevron />
    </em>
  </Select>
);

const LayerRow = ({ layer }) => {
  const on = layer.selected;
  return (
    <Row>
      <Marker $on={on} />
      <Cell $on={on}>{layer.name}</Cell>
      <Cell $on={on} $pl={1}>
        <Swatch />
        White
      </Cell>
      <Cell $on={on} $pl={1.5}>
        <Stroke $on={on} />
        Solid
      </Cell>
      <Dropdown>0.00 mm</Dropdown>
      <Cell $on={on} $pl={0} $center>
        <Check $checked={layer.locked}>{layer.locked && <Tick />}</Check>
      </Cell>
      <Dropdown>{layer.group}</Dropdown>
      <Dropdown>Normal</Dropdown>
      <Cell $on={on} $pl={0} $center>
        <Check $checked>
          <Tick />
        </Check>
      </Cell>
      <Cell $on={on} $pl={0} $center>
        <RedX />
      </Cell>
    </Row>
  );
};

const LayerManager = () => (
  <Dialog>
    <DialogTitle>
      <span>
        <Icon name="stackSmall" size={9} />
        Layer Manager
      </span>
      <Cross $size={7}>✕</Cross>
    </DialogTitle>
    <DialogBar>
      <NewLayer>
        <Icon name="newLayer" size={12} />
        <span>New Layer</span>
      </NewLayer>
      <FilterInput>Filter...</FilterInput>
      <ToolButtons>
        <ToolButton><Icon name="stackDelete" size={22} /></ToolButton>
        <ToolButton><Icon name="stackSelect" size={22} /></ToolButton>
        <ToolButton><Icon name="stackGroups" size={21} /></ToolButton>
      </ToolButtons>
    </DialogBar>
    <Table>
      <HeadRow>
        <span />
        {heads.map((head) => (
          <HeadCell key={head} $on={head === "Group Layer"}>
            {head}
          </HeadCell>
        ))}
      </HeadRow>
      {layers.map((layer) => (
        <LayerRow key={layer.name} layer={layer} />
      ))}
    </Table>
    <DialogFooter>
      <span>Selected Layer:Text</span>
      <FooterButton>Export</FooterButton>
      <FooterButton>Import</FooterButton>
      <FooterButton>Close</FooterButton>
    </DialogFooter>
  </Dialog>
);

/* ---------- status bar and taskbar ---------- */

const StatusBar = styled.footer`
  display: flex;
  align-items: center;
  flex: none;
  height: 16px;
  padding-left: 853px;
  background: ${colors.face};
  color: #333;
  font: 6.800px "Liberation Sans", sans-serif;
`;

const StatusItem = styled.span`
  display: flex;
  align-items: center;
  flex: none;
  height: 16px;
  width: ${({ $w }) => $w}px;
  justify-content: ${({ $icon }) => ($icon ? "center" : "flex-start")};
  background: ${({ $on }) => ($on ? colors.highlight : "none")};
`;

const TaskBar = styled.footer`
  display: flex;
  align-items: center;
  flex: none;
  height: 27px;
  padding-left: 10px;
  background: linear-gradient(
    90deg,
    #e4eef3 0,
    #dfebf4 200px,
    #d3dbef 340px,
    #d4d8ea 460px,
    #cee3f7 510px,
    #d5dcf6 600px,
    #d5d9ea 740px,
    #d4ddf3 840px,
    #d8dfef 950px,
    #deebf5 1010px,
    #e2edf4 1280px
  );
`;

const ActiveApp = styled.span`
  display: flex;
  align-items: center;
  justify-content: center;
  width: 30px;
  height: 27px;
  margin-left: 12.500px;
  background: #f4f9fb;
  border-bottom: 2px solid #1a86c8;
`;

const Clock = styled.time`
  margin-left: auto;
  padding-right: 4px;
  text-align: right;
  color: #222;
  font-size: 7.900px;
  line-height: 12px;
  letter-spacing: -0.25px;
`;

const Pointer = styled.svg`
  position: absolute;
  left: 92px;
  top: 671px;
`;

const Status = () => (
  <StatusBar>
    <StatusItem $w={10} $icon><Icon name="term" size={8.5} /></StatusItem>
    <StatusItem $w={2} />
    <StatusItem $w={9} $icon $on><Icon name="snapBox" /></StatusItem>
    <StatusItem $w={11} $icon><Icon name="snapPoly" /></StatusItem>
    <StatusItem $w={10} $icon><Icon name="snapCloud" /></StatusItem>
    <StatusItem $w={11} $icon><Icon name="contrast" size={8.5} /></StatusItem>
    <StatusItem $w={10} $icon $on><Icon name="gridFill" /></StatusItem>
    <StatusItem $w={11} $icon><Icon name="snapA" /></StatusItem>
    <StatusItem $w={10} $icon><Icon name="snapB" /></StatusItem>
    <StatusItem $w={10} $icon><Icon name="snapC" /></StatusItem>
    <StatusItem $w={5} />
    <StatusItem $w={34}>S: Default</StatusItem>
    <StatusItem $w={11} $icon><Icon name="sceneA" /></StatusItem>
    <StatusItem $w={15} $icon><Icon name="sphere" /></StatusItem>
    <StatusItem $w={1.5} />
    <StatusItem $w={23.5}>Meter</StatusItem>
    <StatusItem $w={22}>1:600</StatusItem>
    <StatusItem $w={18}>Grid</StatusItem>
    <StatusItem $w={38}>Default</StatusItem>
    <StatusItem $w={8}>0</StatusItem>
    <StatusItem $w={11} $icon><Icon name="device" /></StatusItem>
    <StatusItem $w={2} />
    <StatusItem $w={133}>31173.213 m,20037.277 m</StatusItem>
    <StatusItem $w={9} $icon><Icon name="sidePanel" size={8} /></StatusItem>
  </StatusBar>
);

const App = () => (
  <>
    <GlobalStyle />
    <Window>
      <QuickAccess />
      <TabRow>
        {tabs.map(([label, w, active]) => (
          <Tab key={label} $w={w} $active={active}>
            {label}
          </Tab>
        ))}
        <Help>?</Help>
        <Icon name="person" size={9} />
        <Dot $ml={1} />
      </TabRow>
      <Ribbon />
      <Workspace>
        <Dock $w={172} $mr={2} $bg={colors.panel}>
          <DockHeader icon="filterGear" title="View Filter Manager" pr={3.5} />
          <Tree>
            <RootRow>
              <Dot $ml={0} />
              <Icon name="treeDoc" size={9} />
              Unnamed
            </RootRow>
            <FadedRow>Points</FadedRow>
            <TreeRow>
              <Icon name="filterGear" size={11} />
              Imported Files
            </TreeRow>
            <TreeRow $pl={4}>
              <Icon name="globes" size={12} />
            </TreeRow>
            <Thumb />
          </Tree>
          <DockTabs>
            <DockTab $w={67}>
              <Icon name="explorer" size={9} />
              Project Explorer
            </DockTab>
            <DockTab $w={80} $on>
              <Icon name="filterGear" size={9} />
              View Filter Manager
            </DockTab>
          </DockTabs>
        </Dock>
        <Dock $w={210} $mr={3} $bg={colors.face}>
          <DockHeader icon="doc" title="Properties" pr={3.5} />
          <ObjectTile />
          <Combo>
            <Chevron />
          </Combo>
          <PropertyBox />
        </Dock>
        <ViewArea>
          <ViewTabs>
            <ViewTab>
              Plan View [My Filter]
              <Cross $size={8}>✕</Cross>
            </ViewTab>
          </ViewTabs>
          <PlanView />
          <LayerManager />
        </ViewArea>
      </Workspace>
      <Status />
      <TaskBar>
        <svg width="11" height="11" viewBox="0 0 11 11" fill="#111">
          <path d="M0 1.600l4.600-.7v4.300H0zM5.200.8L11 0v5.200H5.200zM0 5.800h4.600v4.300L0 9.400zM5.200 5.800H11V11l-5.800-.8z" />
        </svg>
        <Slot $ml={21.5}>
          <svg width="11" height="11" viewBox="0 0 11 11" fill="none" stroke="#222" strokeWidth="1">
            <circle cx="6.800" cy="4" r="3.300" />
            <path d="M4.500 6.400L0.800 10.200" />
          </svg>
        </Slot>
        <ActiveApp>
          <Icon name="logo" size={16} />
        </ActiveApp>
        <Clock>
          10:02 AM
          <br />
          5/14/2026
        </Clock>
      </TaskBar>
      <Pointer
        width="26"
        height="36"
        viewBox="0 0 26 36"
        fill="#b300f0"
        stroke="#1c0530"
        strokeWidth="1.500"
        strokeLinejoin="round"
      >
        <path d="M2.500 4v27.500l6.500-5 4.500 7 4.500-2-3-7.500h8z" />
      </Pointer>
    </Window>
  </>
);

export default App;
